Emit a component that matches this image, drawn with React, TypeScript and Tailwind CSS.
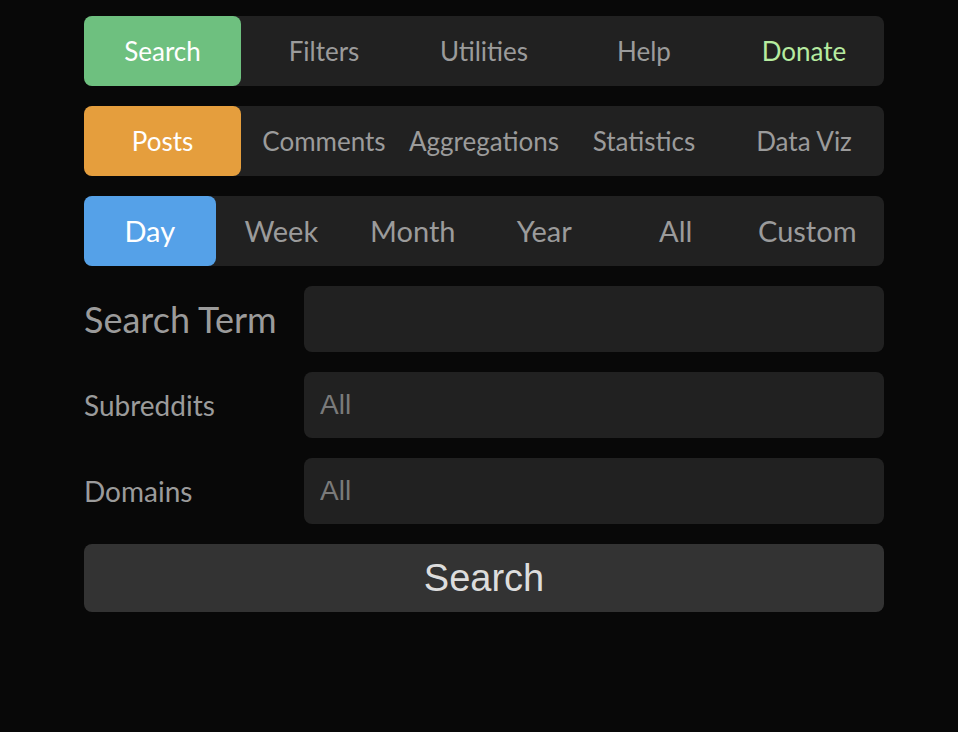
import React, { useState } from "react"

const lato = { fontFamily: "Lato, 'Open Sans', sans-serif" }
const arial = { fontFamily: "'Liberation Sans', Arial, sans-serif" }

function TabBar({
  items,
  active,
  activeClass,
  gridClass,
  textClass,
  extra,
}: {
  items: string[]
  active: string
  activeClass: string
  gridClass: string
  textClass: string
  extra?: Record<string, string>
}) {
  const [current, setCurrent] = useState(active)
  return (
    <div className={`grid ${gridClass} h-[70px] rounded-lg bg-[#212121]`}>
      {items.map((item) => {
        const isActive = current === item
        return (
          <button
            key={item}
            onClick={() => setCurrent(item)}
            className={`flex items-center justify-center rounded-lg ${textClass} ${
              isActive ? `${activeClass} text-white` : extra?.[item] ?? "text-[#9b9b9b]"
            }`}
          >
            {item}
          </button>
        )
      })}
    </div>
  )
}

export default function App() {
  return (
    <div className="min-h-screen bg-[#080808] pt-4" style={lato}>
      <div className="ml-[84px] flex w-[800px] flex-col gap-5">
        {/* Main nav */}
        <TabBar
          items={["Search", "Filters", "Utilities", "Help", "Donate"]}
          active="Search"
          activeClass="bg-[#6ec07f] mr-[3px]"
          gridClass="grid-cols-5"
          textClass="text-[26px]"
          extra={{ Donate: "text-[#b6eba0]" }}
        />

        {/* Type */}
        <TabBar
          items={["Posts", "Comments", "Aggregations", "Statistics", "Data Viz"]}
          active="Posts"
          activeClass="bg-[#e59e3d] mr-[3px]"
          gridClass="grid-cols-5"
          textClass="text-[26px]"
        />

        {/* Time range */}
        <TabBar
          items={["Day", "Week", "Month", "Year", "All", "Custom"]}
          active="Day"
          activeClass="bg-[#55a1e8]"
          gridClass="grid-cols-[repeat(6,131.5px)]"
          textClass="text-[29px]"
        />

        {/* Fields */}
        <div className="flex items-center">
          <label className="w-[220px] text-[36px] text-[#9b9b9b]">Search Term</label>
          <input className="h-[66px] flex-1 rounded-lg bg-[#212121] px-4 text-[28px] text-[#ccc] outline-none" style={arial} />
        </div>
        <div className="flex items-center">
          <label className="w-[220px] text-[28px] text-[#9b9b9b]">Subreddits</label>
          <input
            placeholder="All"
            className="h-[66px] flex-1 rounded-lg bg-[#212121] px-4 text-[28px] text-[#ccc] outline-none placeholder:text-[#7a7a7a]"
            style={arial}
          />
        </div>
        <div className="flex items-center">
          <label className="w-[220px] text-[28px] text-[#9b9b9b]">Domains</label>
          <input
            placeholder="All"
            className="h-[66px] flex-1 rounded-lg bg-[#212121] px-4 text-[28px] text-[#ccc] outline-none placeholder:text-[#7a7a7a]"
            style={arial}
          />
        </div>
        <button className="h-[68px] rounded-lg bg-[#333333] text-[38px] text-[#dddddd]" style={arial}>
          Search
        </button>
      </div>
    </div>
  )
}
